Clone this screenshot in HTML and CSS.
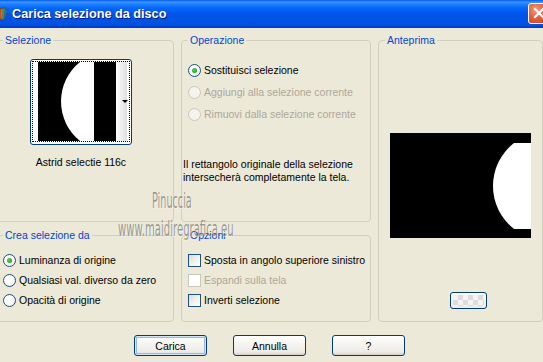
FILE: index.html
```html
<!DOCTYPE html>
<html lang="it">

<head>
    <meta charset="UTF-8" />
    <meta name="viewport" content="width=device-width, initial-scale=1.0" />
    <link rel="stylesheet" href="styles.css">
    <title>Carica selezione da disco</title>
</head>

<body>
    <div class="window">
        <div class="titlebar">
            <svg class="app-icon" width="14" height="14" viewBox="0 0 14 14">
                <path d="M1 2 L9 1 L12 4 L8 13 L3 12 Z" fill="#f6c343" />
                <path d="M1 2 L5 1.5 L6 12.5 L3 12 Z" fill="#d8402a" />
                <path d="M5 1.5 L9 1 L10 3 L7 12.8 L6 12.5 Z" fill="#3d9a3a" />
                <path d="M9 1 L12 4 L8 13 L7 12.8 Z" fill="#2a63c8" />
                <path d="M1 2 L9 1 L12 4 L8 13 L3 12 Z" fill="none" stroke="#5a3a1a" stroke-width="0.8" />
            </svg>
            <span class="title">Carica selezione da disco</span>
            <span class="close">
                <svg width="12" height="12" viewBox="0 0 12 12">
                    <path d="M2 2 L10 10 M10 2 L2 10" stroke="#fff" stroke-width="2.2" stroke-linecap="square" />
                </svg>
            </span>
        </div>

        <div class="dialog">
            <div class="groups">
                <fieldset class="group sel">
                    <legend>Selezione</legend>
                    <div class="thumb-wrap">
                        <div class="thumb">
                            <div class="thumb-focus">
                                <svg width="89" height="79" viewBox="0 0 89 79">
                                    <defs>
                                        <linearGradient id="strip" x1="0" x2="1" y1="0" y2="0">
                                            <stop offset="0" stop-color="#ffffff" />
                                            <stop offset="1" stop-color="#dedede" />
                                        </linearGradient>
                                    </defs>
                                    <rect width="89" height="79" fill="#000" />
                                    <path d="M56 0 L42 0 A50.6 50.6 0 0 0 42 79 L56 79 Z" fill="#fff" />
                                    <rect x="78" y="0" width="11" height="79" fill="url(#strip)" />
                                </svg>
                                <span class="thumb-arrow"></span>
                            </div>
                        </div>
                        <div class="thumb-label">Astrid selectie 116c</div>
                    </div>
                </fieldset>

                <fieldset class="group op">
                    <legend>Operazione</legend>
                    <div class="choices">
                        <div class="choice"><span class="radio checked"></span>Sostituisci selezione</div>
                        <div class="choice disabled"><span class="radio"></span>Aggiungi alla selezione corrente</div>
                        <div class="choice disabled"><span class="radio"></span>Rimuovi dalla selezione corrente</div>
                    </div>
                    <p class="note">Il rettangolo originale della selezione<br>intersecherà completamente la tela.</p>
                </fieldset>

                <fieldset class="group preview">
                    <legend>Anteprima</legend>
                    <svg class="preview-img" width="141" height="105" viewBox="0 0 141 105">
                        <rect width="141" height="105" fill="#000" />
                        <path d="M141 10 L124 10 A54.5 54.5 0 0 0 124 96 L141 96 Z" fill="#fff" />
                    </svg>
                    <button class="mini-btn"><span class="checker"></span></button>
                </fieldset>

                <fieldset class="group source">
                    <legend>Crea selezione da</legend>
                    <div class="choices tight">
                        <div class="choice"><span class="radio checked"></span>Luminanza di origine</div>
                        <div class="choice"><span class="radio"></span>Qualsiasi val. diverso da zero</div>
                        <div class="choice"><span class="radio"></span>Opacità di origine</div>
                    </div>
                </fieldset>

                <fieldset class="group options">
                    <legend>Opzioni</legend>
                    <div class="choices tight">
                        <div class="choice"><span class="check"></span>Sposta in angolo superiore sinistro</div>
                        <div class="choice disabled"><span class="check"></span>Espandi sulla tela</div>
                        <div class="choice"><span class="check"></span>Inverti selezione</div>
                    </div>
                </fieldset>
            </div>

            <div class="buttons">
                <button class="btn default">Carica</button>
                <button class="btn">Annulla</button>
                <button class="btn">?</button>
            </div>
        </div>

        <div class="watermark">
            <span class="wm-name">Pinuccia</span>
            <span class="wm-url">www.maidiregrafica.eu</span>
        </div>
    </div>
</body>

</html>
```

FILE: styles.css
```css
:root {
    --face: #ece9d8;
    --group-border: #d0d0bf;
    --legend: #0046d5;
    --xp-border: #1c5180;
    --disabled: #aca899;
}

html,
body {
    margin: 0;
    padding: 0;
    overflow: hidden;
}

body {
    background: var(--face);
    font-family: "Liberation Sans", Arial, sans-serif;
    font-size: 10.5px;
    color: #000;
}

.window {
    position: relative;
    width: 543px;
    height: 362px;
}

/* title bar */

.titlebar {
    display: flex;
    align-items: center;
    height: 28px;
    background: linear-gradient(#0058ee 0, #3d95ff 2px, #1f82ff 4px, #0467fb 8px, #0055e8 14px, #0054e3 22px, #0050de 25px, #003dc8 27px, #003dc8 28px);
}

.app-icon {
    margin-left: -4px;
    margin-top: -1px;
}

.title {
    margin-left: 2px;
    margin-top: -1px;
    color: #fff;
    font-weight: bold;
    font-size: 12.7px;
    text-shadow: 1px 1px 0 #0a1e7a;
}

.close {
    display: flex;
    align-items: center;
    justify-content: center;
    margin-left: auto;
    margin-right: -7px;
    margin-top: -2px;
    width: 20px;
    height: 19px;
    border: 1px solid #fff;
    border-radius: 3px;
    background: radial-gradient(circle at 35% 30%, #f09a7c 0, #e4613f 45%, #c8391b 100%);
}

/* group boxes */

.dialog {
    padding-top: 6px;
}

.groups {
    display: grid;
    grid-template-columns: 178px 190px 165px;
    grid-template-rows: 188px 93px;
    column-gap: 7px;
    row-gap: 7px;
    margin-left: -4px;
}

.group {
    margin: 0;
    padding: 0;
    min-width: 0;
    border: 1px solid var(--group-border);
    border-radius: 4px;
}

.group legend {
    margin-left: 6px;
    padding: 0 2px;
    color: var(--legend);
    line-height: 13px;
}

.sel {
    grid-column: 1;
    grid-row: 1;
}

.op {
    grid-column: 2;
    grid-row: 1;
}

.preview {
    grid-column: 3;
    grid-row: 1 / span 2;
}

.source {
    grid-column: 1;
    grid-row: 2;
}

.options {
    grid-column: 2;
    grid-row: 2;
}

/* selection thumbnail */

.thumb-wrap {
    display: inline-flex;
    flex-direction: column;
    align-items: center;
    margin: 12px 0 0 33px;
}

.thumb {
    width: 99px;
    height: 83px;
    border: 1px solid #003c74;
    border-radius: 3px;
    background: #fff;
    padding: 1px 0 0 1px;
    box-sizing: content-box;
}

.thumb-focus {
    position: relative;
    width: 90px;
    height: 79px;
    padding: 0 1px 0 5px;
    border: 1px dotted #000;
}

.thumb-focus svg {
    display: block;
}

.thumb-arrow {
    position: absolute;
    right: 1px;
    top: 38px;
    border-left: 3px solid transparent;
    border-right: 3px solid transparent;
    border-top: 3px solid #000;
}

.thumb-label {
    margin-top: 11px;
    line-height: 13px;
    white-space: nowrap;
}

/* radios and checks */

.choices {
    display: flex;
    flex-direction: column;
    gap: 9px;
    margin: 17px 0 0 6px;
}

.choices.tight {
    gap: 7px;
    margin-top: 12px;
}

.choice {
    display: flex;
    align-items: center;
    gap: 3px;
    height: 13px;
    line-height: 13px;
    white-space: nowrap;
}

.choice.disabled {
    color: var(--disabled);
}

.radio {
    position: relative;
    flex: none;
    width: 11px;
    height: 11px;
    border: 1px solid var(--xp-border);
    border-radius: 50%;
    background: radial-gradient(circle at 35% 35%, #fff 40%, #e6e4dc 100%);
}

.radio.checked::after {
    content: "";
    position: absolute;
    left: 3px;
    top: 3px;
    width: 5px;
    height: 5px;
    border-radius: 50%;
    background: radial-gradient(circle at 40% 40%, #5bd55b 0, #21a121 70%);
}

.disabled .radio {
    border-color: #cac8bb;
    background: #f4f3ee;
}

.check {
    flex: none;
    width: 11px;
    height: 11px;
    border: 1px solid var(--xp-border);
    background: linear-gradient(135deg, #dcdad2 0, #f4f4f0 60%, #fff 100%);
}

.disabled .check {
    border-color: #cac8bb;
    background: #fff;
}

.note {
    margin: 37px 0 0 1px;
    line-height: 13px;
}

/* preview */

.preview-img {
    display: block;
    margin: 86px 0 0 11px;
}

.mini-btn {
    display: block;
    width: 37px;
    height: 17px;
    margin: 54px 0 0 71px;
    padding: 2px;
    border: 1px solid #003c74;
    border-radius: 3px;
    background: linear-gradient(#fff, #ecebe6);
}

.checker {
    display: block;
    width: 100%;
    height: 100%;
    background-color: #f4f4f4;
    background-image:
        linear-gradient(45deg, #dcdcdc 25%, transparent 25%, transparent 75%, #dcdcdc 75%),
        linear-gradient(45deg, #dcdcdc 25%, transparent 25%, transparent 75%, #dcdcdc 75%);
    background-size: 10px 10px;
    background-position: 0 0, 5px 5px;
}

/* dialog buttons */

.buttons {
    display: flex;
    gap: 26px;
    margin-top: 13px;
    padding-left: 134px;
}

.btn {
    width: 73px;
    height: 21px;
    padding: 0;
    border: 1px solid #003c74;
    border-radius: 3px;
    background: linear-gradient(#fff 0, #f6f5f1 40%, #ecebe6 85%, #d6d0c5 100%);
    font-family: "Liberation Sans", Arial, sans-serif;
    font-size: 10.5px;
    color: #000;
}

.btn.default {
    box-shadow: inset 0 0 0 1px #cee7ff, inset 0 0 0 2px #98b8ea;
}

/* watermark over the screenshot */

.watermark {
    position: absolute;
    left: 0;
    top: 0;
    pointer-events: none;
    font-family: "DejaVu Sans", sans-serif;
    font-size: 21px;
    color: rgba(95, 95, 95, 0.6);
    text-shadow: 1px 1px 0 rgba(255, 255, 255, 0.5);
}

.wm-name {
    position: absolute;
    left: 152px;
    top: 189px;
    transform: scaleX(0.46);
    transform-origin: left top;
    white-space: nowrap;
}

.wm-url {
    position: absolute;
    left: 118px;
    top: 217px;
    transform: scaleX(0.48);
    transform-origin: left top;
    white-space: nowrap;
}
```
